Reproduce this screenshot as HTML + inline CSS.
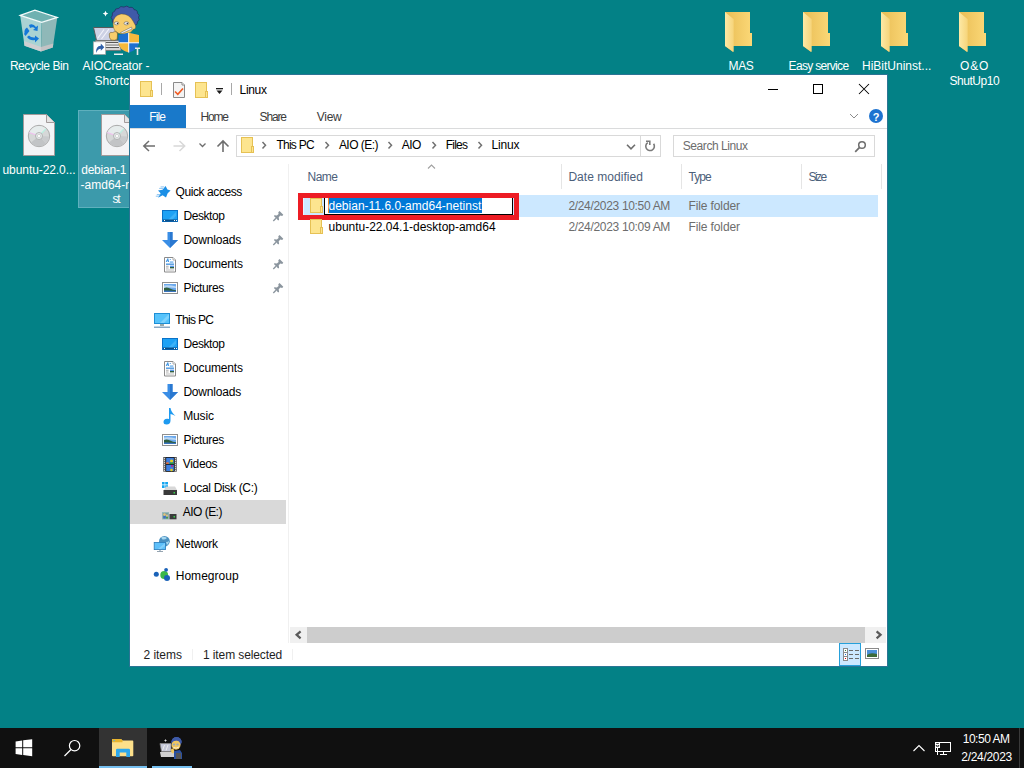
<!DOCTYPE html>
<html><head><meta charset="utf-8">
<style>
*{margin:0;padding:0;box-sizing:border-box}
html,body{width:1024px;height:768px;overflow:hidden}
body{background:#038186;position:relative;font-family:"Liberation Sans",sans-serif;font-size:12px;color:#000}
.a{position:absolute}
.t{position:absolute;white-space:nowrap;line-height:12px;font-size:12px}
svg.i{position:absolute;overflow:visible}
</style></head>
<body>
<svg class="i" style="left:0;top:0" width="1024" height="768">
 <defs>
  <linearGradient id="fback" x1="0" y1="0" x2="1" y2="0">
   <stop offset="0" stop-color="#e9bd55"/><stop offset="1" stop-color="#fbd877"/>
  </linearGradient>
  <linearGradient id="fflap" x1="0" y1="0" x2="1" y2="0">
   <stop offset="0" stop-color="#fde9a6"/><stop offset="1" stop-color="#f6d47a"/>
  </linearGradient>
  <linearGradient id="cd" x1="0" y1="0" x2="0" y2="1">
   <stop offset="0" stop-color="#e9eaea"/><stop offset="0.55" stop-color="#d2d3d3"/><stop offset="1" stop-color="#b9b9b9"/>
  </linearGradient>
  <g id="dfold">
   <path d="M0 0 H25 V21 H27 V34 H8 V40 L0 34 Z" fill="url(#fback)"/>
   <path d="M0 0 L8.7 7.3 V40 L0 34 Z" fill="url(#fflap)"/>
  </g>
  <g id="iso">
   <path d="M0.5 0.5 H23.5 L31.5 8.5 V41.5 H0.5 Z" fill="#f3f4f6" stroke="#a39b9b"/>
   <path d="M23.5 0.5 V8.5 H31.5" fill="#e4e4e4" stroke="#a39b9b"/>
   <circle cx="16" cy="22" r="10.7" fill="#d6d8d8" stroke="#9c9c9c" stroke-width="0.8"/>
   <path d="M16 22 L6.5 18.5 A10.3 10.3 0 0 1 23 14.6 Z" fill="#e6ecec"/>
   <path d="M16 22 L23 29.5 A10.3 10.3 0 0 1 8 28.5 Z" fill="#c2c4c6"/>
   <path d="M16 22 L26.3 22.5 A10.3 10.3 0 0 1 23 29.5 Z" fill="#c9cbcd"/>
   <path d="M16 22 L22.8 14.8" stroke="#b8f0e0" stroke-width="1.1"/>
   <path d="M16 22 L6.2 18.6" stroke="#f0c0f0" stroke-width="1.1"/>
   <circle cx="16" cy="22" r="3.5" fill="#e4eaea" stroke="#a8a8a8" stroke-width="0.8"/>
   <circle cx="16" cy="22" r="1.6" fill="#fff" stroke="#c0c0c0" stroke-width="0.6"/>
  </g>
 </defs>
 <!-- recycle bin -->
 <path d="M20.2 15.4 L41.7 22.3 L41 51.5 L24.5 45.7 Z" fill="#a9d3d3"/>
 <path d="M41.7 22.3 L57.3 17.4 L52.8 47.6 L41 51.5 Z" fill="#8fb8b8"/>
 <path d="M24 41 L41 47 L41 51.5 L24.5 45.7 Z" fill="#cfcfd1"/>
 <path d="M41 47 L53.3 43.5 L52.8 47.6 L41 51.5 Z" fill="#c3c3c5"/>
 <path d="M20.2 15.4 L34.9 10.2 L57.3 17.4 L41.7 22.3 Z" fill="#6fb1b1" stroke="#f4fbfb" stroke-width="1.2"/>
 <path d="M29 25 Q33 23 36 27 L38 25.5 L37.5 31 L33 30 L35 28.5 Q33 26.5 30 28 Z M24.5 33 Q24 29 27 27.5 L29.5 31 L25.5 36 L24 34 Z M27 37 Q30 41 35 40 L35 42.5 L39 38.5 L35 35.5 L35 37.5 Q31 38 29 35.5 Z" fill="#1478d8"/>
 <!-- AIOCreator placeholder -->
 <g id="aio">
  <path d="M93.5 27.5 H117 V40.5 H96.5 Z" fill="#cdd1e4" stroke="#5a5a5a" stroke-width="1"/>
  <path d="M97.5 38.5 L104 29.5 M101.5 39 L109 29" stroke="#f4f4fa" stroke-width="1.1"/>
  <path d="M95.5 40.5 H120 L121 50.5 H97.5 Z" fill="#d4d4d4" stroke="#707070" stroke-width="0.8"/>
  <path d="M98 42.5 H118 M99 45 H119 M99 47.5 H119" stroke="#222" stroke-width="0.7"/>
  <path d="M98 43.8 H118.5 M99 46.3 H119" stroke="#f4f4f4" stroke-width="1"/>
  <path d="M114 53.5 H123 V55 H114 Z" fill="#eee"/>
  <path d="M138.5 17.5 Q140.4 20.1 137.4 21.8 Q137.8 25.0 134.1 25.3 Q133.0 28.5 129.4 27.5 Q126.9 30.1 123.9 27.9 Q120.5 29.6 118.7 26.6 Q115.0 26.9 114.6 23.7 Q111.2 22.7 112.4 19.7 Q109.9 17.5 112.4 15.3 Q111.2 12.3 114.6 11.3 Q115.0 8.1 118.7 8.4 Q120.5 5.4 123.9 7.1 Q126.9 4.9 129.4 7.5 Q133.0 6.5 134.1 9.7 Q137.8 10.0 137.4 13.2 Q140.4 14.9 138.5 17.5 Z" fill="#3f5aa8" stroke="#1c2550" stroke-width="0.6"/>
  <path d="M113 24 Q113 15.5 121 14 Q129 13.5 133 21 L135.5 25.5 Q136.5 29 133 29.5 Q131 33.5 125 34 Q118 34.5 115 31 Q113 28 113 24 Z" fill="#f7cd6b" stroke="#5a4a20" stroke-width="0.4"/>
  <ellipse cx="116.5" cy="23.3" rx="2.3" ry="1.6" fill="#e8eaf0" stroke="#555" stroke-width="0.5"/>
  <ellipse cx="126.4" cy="23.3" rx="2.4" ry="1.6" fill="#e8eaf0" stroke="#555" stroke-width="0.5"/>
  <circle cx="117.5" cy="23.4" r="0.7" fill="#333"/><circle cx="127.3" cy="23.4" r="0.7" fill="#333"/>
  <path d="M120.5 32.5 L131.5 27 L132 29 L122 33.5 Z" fill="#f0f0f0" stroke="#444" stroke-width="0.4"/>
  <path d="M109.3 34 Q110 31.5 112.5 32.5 L115 31.5 Q117.5 31.5 117.5 34 L117.2 39 Q115 41 111 40 Q109 38 109.3 34 Z" fill="#f7cd6b" stroke="#5a4a20" stroke-width="0.5"/>
  <path d="M118.6 35 L128.7 32.8 L139 35 V43 Q138 50 128.7 52.5 Q119 50 118.6 43 Z" fill="#1d6fd0"/>
  <path d="M128.7 32.8 L139 35 V42.8 H128.7 Z M118.6 42.8 H128.7 V52.5 Q119 50 118.6 43 Z" fill="#f6b93b"/>
  <path d="M128.7 33 V52.5 M118.6 42.8 H139" stroke="#fff" stroke-width="1"/>
  <path d="M105.5 10.8 L106.4 12.7 L108.3 13.6 L106.4 14.5 L105.5 16.4 L104.6 14.5 L102.7 13.6 L104.6 12.7 Z" fill="#fff"/>
  <rect x="93.3" y="41.8" width="12.4" height="12.6" fill="#fff" stroke="#a0a0a0" stroke-width="0.7"/>
  <path d="M96.2 53 Q95.5 46 100.8 45.8 V43.6 L104.3 47.2 L100.8 50.8 V48.8 Q97.8 48.8 96.2 53 Z" fill="#2f5fa8"/>
  <path d="M135 47.5 H140 V49 H138.3 V55 H136.7 V49 H135 Z" fill="#e8e8e8"/>
 </g>
 <!-- ISO icons -->
 <use href="#iso" x="23" y="114"/>
 <rect x="78.5" y="110.5" width="60" height="97" fill="#3c9aab" stroke="#5fb0bd"/>
 <use href="#iso" x="101" y="114"/>
 <!-- folders right -->
 <use href="#dfold" x="725" y="12"/>
 <use href="#dfold" x="803" y="12"/>
 <use href="#dfold" x="881" y="12"/>
 <use href="#dfold" x="959" y="12"/>
</svg>

<div class="t" style="left:9.90px;top:60px;color:#fff;letter-spacing:-0.438px">Recycle Bin</div><div class="t" style="left:82.50px;top:60px;color:#fff;letter-spacing:-0.093px">AIOCreator -</div><div class="t" style="left:94.50px;top:75px;color:#fff">Shortcut</div><div class="t" style="left:2.50px;top:164px;color:#fff;letter-spacing:-0.079px">ubuntu-22.0...</div><div class="t" style="left:81.20px;top:164px;color:#fff;letter-spacing:-0.219px">debian-1</div><div class="t" style="left:80.60px;top:179px;color:#fff">-amd64-netin</div><div class="t" style="left:112.40px;top:193px;color:#fff;letter-spacing:-1.200px">st</div><div class="t" style="left:728.50px;top:60px;color:#fff;letter-spacing:-0.350px">MAS</div><div class="t" style="left:788.60px;top:60px;color:#fff;letter-spacing:-0.686px">Easy service</div><div class="t" style="left:862.00px;top:60px;color:#fff;letter-spacing:-0.001px">HiBitUninst...</div><div class="t" style="left:960.00px;top:60px;color:#fff;letter-spacing:0.831px">O&amp;O</div><div class="t" style="left:949.40px;top:74.5px;color:#fff;letter-spacing:-0.443px">ShutUp10</div>
<!-- window frame -->
<div class="a" style="left:129px;top:74px;width:759px;height:593px;background:#fff;border:1px solid #2b7494"></div>
<!-- title bar quick access toolbar -->
<svg class="i" style="left:0;top:0" width="1024" height="768" viewBox="0 0 1024 768">
  <!-- folder1 -->
  <g id="qfold">
    <rect x="140.5" y="81.5" width="11" height="15" fill="#fde58f" stroke="#e6c154"/>
    <rect x="150.5" y="90.5" width="2" height="6" fill="#fde58f" stroke="#e6c154"/>
  </g>
  <line x1="161.5" y1="83" x2="161.5" y2="95" stroke="#a8a8a8"/>
  <!-- properties doc -->
  <path d="M173.5 82.5 H182 L184.5 85 V97.5 H173.5 Z" fill="#f4f4f4" stroke="#8a8a8a"/>
  <path d="M182 82.5 V85 H184.5" fill="#fff" stroke="#8a8a8a"/>
  <path d="M175 91.5 L177.8 94.3 L183 88.5" fill="none" stroke="#f05a22" stroke-width="1.6"/>
  <!-- folder2 -->
  <rect x="195.5" y="82.5" width="11" height="15" fill="#fde58f" stroke="#e6c154"/>
  <rect x="205.5" y="91.5" width="2" height="6" fill="#fde58f" stroke="#e6c154"/>
  <!-- dropdown -->
  <rect x="216" y="88" width="7" height="1.3" fill="#1a1a1a"/>
  <path d="M216.5 90.5 H222.5 L219.5 94 Z" fill="#1a1a1a"/>
  <line x1="231.5" y1="83" x2="231.5" y2="95" stroke="#a8a8a8"/>
  <!-- min max close -->
  <rect x="768" y="89" width="10" height="1" fill="#000"/>
  <rect x="813.5" y="84.5" width="9" height="9" fill="none" stroke="#000"/>
  <path d="M859 84 L869 94 M869 84 L859 94" stroke="#000" stroke-width="1.05"/>
</svg>
<!-- ribbon -->
<div class="a" style="left:130px;top:128px;width:757px;height:1px;background:#dadbdc"></div>
<div class="a" style="left:130px;top:105px;width:56px;height:23px;background:#1979ca"></div>
<svg class="i" style="left:0;top:0" width="1024" height="768">
  <path d="M850 114 L854 118 L858 114" fill="none" stroke="#8c8c8c" stroke-width="1"/>
  <circle cx="876" cy="116" r="7" fill="#1e73d0"/>
  <text x="876" y="120.5" font-family="Liberation Sans" font-weight="bold" font-size="11" fill="#fff" text-anchor="middle">?</text>
</svg>
<!-- nav buttons -->
<svg class="i" style="left:0;top:0" width="1024" height="768">
  <path d="M143.5 146 H155 M149 141 L143.8 146 L149 151" fill="none" stroke="#6e6e6e" stroke-width="1.5"/>
  <path d="M185 146 H173.5 M179.5 141 L184.7 146 L179.5 151" fill="none" stroke="#d8d8d8" stroke-width="1.5"/>
  <path d="M199.5 143.5 L202.5 146.5 L205.5 143.5" fill="none" stroke="#6e6e6e" stroke-width="1.3"/>
  <path d="M223 152 V141 M217.5 146.5 L223 141 L228.5 146.5" fill="none" stroke="#6e6e6e" stroke-width="1.6"/>
</svg>
<!-- address box -->
<div class="a" style="left:236px;top:135px;width:425px;height:22px;border:1px solid #d9d9d9"></div>
<div class="a" style="left:640px;top:135px;width:1px;height:22px;background:#d9d9d9"></div>
<svg class="i" style="left:0;top:0" width="1024" height="768">
  <rect x="241.5" y="137.5" width="11" height="15" fill="#fde58f" stroke="#e6c154"/>
  <rect x="251.5" y="146.5" width="2" height="6" fill="#fde58f" stroke="#e6c154"/>
  <path d="M262.5 142 L265.5 145.2 L262.5 148.4" fill="none" stroke="#707070" stroke-width="1.5"/>
  <path d="M325.5 142 L328.5 145.2 L325.5 148.4" fill="none" stroke="#707070" stroke-width="1.5"/>
  <path d="M388.5 142 L391.5 145.2 L388.5 148.4" fill="none" stroke="#707070" stroke-width="1.5"/>
  <path d="M432.5 142 L435.5 145.2 L432.5 148.4" fill="none" stroke="#707070" stroke-width="1.5"/>
  <path d="M478.5 142 L481.5 145.2 L478.5 148.4" fill="none" stroke="#707070" stroke-width="1.5"/>
  <path d="M627 144.8 L631 148.8 L635 144.8" fill="none" stroke="#6e6e6e" stroke-width="1.6"/>
  <path d="M653.6 143.8 A4.3 4.3 0 1 1 647.8 142.6" fill="none" stroke="#7a7a7a" stroke-width="1.6"/>
  <path d="M646 141.2 L649.8 141.2 L649.8 145" fill="none" stroke="#7a7a7a" stroke-width="1.6"/>
</svg>
<!-- search box -->
<div class="a" style="left:673px;top:135px;width:202px;height:22px;border:1px solid #d9d9d9"></div>
<svg class="i" style="left:0;top:0" width="1024" height="768">
  <circle cx="862" cy="145" r="3.3" fill="none" stroke="#6e6e6e" stroke-width="1.5"/>
  <path d="M859.6 147.4 L855.2 151.8" stroke="#6e6e6e" stroke-width="1.7"/>
</svg>
<!-- nav pane separator -->
<div class="a" style="left:288px;top:164px;width:1px;height:479px;background:#f0f0f0"></div>
<!-- column headers -->
<svg class="i" style="left:0;top:0" width="1024" height="768">
  <path d="M428 168.5 L431.5 165 L435 168.5" fill="none" stroke="#a0a0a0" stroke-width="1.1"/>
  <rect x="561" y="164" width="1" height="25" fill="#e5e5e5"/>
  <rect x="681" y="164" width="1" height="25" fill="#e5e5e5"/>
  <rect x="801" y="164" width="1" height="25" fill="#e5e5e5"/>
  <rect x="881" y="164" width="1" height="25" fill="#e5e5e5"/>
</svg>
<!-- selection row -->
<div class="a" style="left:298px;top:195px;width:580px;height:22px;background:#cce8ff"></div>
<!-- red box -->
<div class="a" style="left:298px;top:193px;width:221px;height:27px;border:5px solid #ed1c24"></div>
<div class="a" style="left:303px;top:198px;width:1px;height:17px;background:#e8f4ff"></div>
<!-- textbox -->
<div class="a" style="left:324px;top:198px;width:189px;height:17px;background:#fff;border-left:1px solid #000;border-right:1px solid #000;border-bottom:1px solid #000"></div>
<div class="a" style="left:328px;top:198px;width:1px;height:15px;background:#f28a1f"></div>
<div class="a" style="left:329px;top:198px;width:153px;height:15px;background:#0078d7"></div>
<svg class="i" style="left:0;top:0" width="1024" height="768">
  <rect x="310.5" y="198.5" width="11" height="14" fill="#fde58f" stroke="#e6c154"/>
  <rect x="320.5" y="206.5" width="2" height="6" fill="#fde58f" stroke="#e6c154"/>
  <rect x="310.5" y="219.5" width="11" height="14" fill="#fde58f" stroke="#e6c154"/>
  <rect x="320.5" y="227.5" width="2" height="6" fill="#fde58f" stroke="#e6c154"/>
</svg>
<!-- nav highlight -->
<div class="a" style="left:130px;top:500px;width:156px;height:24px;background:#d9d9d9"></div>
<!-- nav icons -->
<svg class="i" style="left:0;top:0" width="1024" height="768">
 <defs>
  <g id="ndesk">
   <rect x="0.5" y="0.5" width="15" height="11" fill="#1ea2f5" stroke="#0a72c8"/>
   <path d="M6 10 L14 2 V6 L10 10 Z" fill="#53bdfa" opacity="0.6"/>
   <rect x="1" y="9.5" width="14" height="2" fill="#0a4f8a"/>
   <rect x="2" y="10" width="1" height="1" fill="#fff"/><rect x="12" y="10" width="1" height="1" fill="#fff"/><rect x="14" y="10" width="1" height="1" fill="#fff"/>
  </g>
  <g id="ndown">
   <path d="M5.5 0 H10.5 V8 H16 L8 16 L0 8 H5.5 Z" fill="#3a8ee6"/>
   <path d="M8 0 H10.5 V8 H16 L8 16 Z" fill="#2a78d0"/>
  </g>
  <g id="ndoc">
   <path d="M0.5 0.5 H9 L11.5 3 V15 H0.5 Z" fill="#fff" stroke="#8a8a8a"/>
   <path d="M9 0.5 V3 H11.5" fill="#fff" stroke="#9a9a9a" stroke-width="0.8"/>
   <path d="M2.2 5 L3.8 1.6 L4.6 5 M2.8 3.8 H4.3" stroke="#2a8ae0" stroke-width="0.9" fill="none"/>
   <rect x="5.8" y="4.6" width="3.6" height="0.9" fill="#2a8ae0"/>
   <rect x="5.8" y="2" width="0.9" height="0.9" fill="#2a8ae0"/>
   <rect x="2" y="6.6" width="8" height="1.1" fill="#1a7ad8"/>
   <rect x="2" y="8.8" width="2.6" height="0.8" fill="#999"/>
   <rect x="2" y="10.6" width="2.6" height="0.8" fill="#999"/>
   <rect x="6" y="8.6" width="4" height="1.4" fill="#5a9ae8"/>
   <rect x="6" y="10" width="4" height="1.4" fill="#2f5e3e"/>
   <rect x="2" y="12.6" width="8" height="0.8" fill="#aaa"/>
  </g>
  <g id="npic">
   <rect x="0.5" y="0.5" width="15" height="11" fill="#fff" stroke="#8f8f8f"/>
   <rect x="2" y="2" width="12" height="8" fill="#6aa8ec"/>
   <path d="M2 3.5 Q7 2.5 14 4.5 V6 Q8 5 2 6 Z" fill="#cfe4f6" opacity="0.8"/>
   <path d="M2 6 Q5 5 8 6.5 Q11 8 14 8.3 V10 H2 Z" fill="#2f5e3e"/>
   <path d="M2 8.6 Q8 8.2 14 9 V10 H2 Z" fill="#3a74c0"/>
  </g>
 </defs>
 <!-- quick access star -->
 <path d="M165.6 186 L167.4 189.6 L170.6 190.4 L167.7 193.2 L166 197.5 L162.6 195.3 L158.1 197.8 L160.6 193.3 L158 190.4 L162.5 189.8 Z" fill="#1b8fe6"/>
 <path d="M160.6 186.9 H164.2 M159.2 188.4 H163 M156.8 194.6 H160.4 M155.8 196.2 H159.2" stroke="#7fbdf0" stroke-width="0.9"/>
 <use href="#ndesk" x="162" y="210"/>
 <use href="#ndown" x="162" y="232"/>
 <use href="#ndoc" x="164" y="257"/>
 <use href="#npic" x="162" y="282"/>
 <!-- this pc -->
 <rect x="154.5" y="313.5" width="15" height="10" fill="#56c3fb" stroke="#1d8fd6"/>
 <path d="M160 323 L169 314 V318 L164 323 Z" fill="#8ed8fd" opacity="0.7"/>
 <rect x="160" y="324" width="4" height="2" fill="#9aa"/>
 <rect x="154" y="326.5" width="16" height="1.5" fill="#8aa9c4"/>
 <use href="#ndesk" x="162" y="338"/>
 <use href="#ndoc" x="164" y="361"/>
 <use href="#ndown" x="162" y="384"/>
 <!-- music -->
 <path d="M169 408 H170.5 Q171 412 175.5 416 Q173 414.5 170.5 414 V420.5 Q170.5 424.5 166.5 424.5 Q163.5 424.5 163.5 422 Q163.5 419 167 418.7 Q168.2 418.6 169 419 Z" fill="#1e9af0"/>
 <use href="#npic" x="162" y="434"/>
 <!-- videos -->
 <rect x="163.2" y="457" width="13.6" height="14.7" fill="#5a5a5a"/>
 <rect x="165.6" y="457" width="8.8" height="14.7" fill="#151515"/>
 <rect x="166.2" y="457.8" width="7.6" height="6.2" fill="#3d7fe0"/>
 <rect x="166.2" y="464.8" width="7.6" height="6.2" fill="#3d7fe0"/>
 <circle cx="171.6" cy="461" r="1.6" fill="#e8d020"/><rect x="169.5" y="462.5" width="4.3" height="1.5" fill="#2e9a3a"/>
 <rect x="166.2" y="462.3" width="2.5" height="1.7" fill="#e86a30"/>
 <circle cx="171.5" cy="470" r="1.3" fill="#e8d020"/><circle cx="172" cy="466" r="1" fill="#c02080"/>
 <path d="M164.4 458.2 V471 M175.6 458.2 V471" stroke="#fff" stroke-width="1" stroke-dasharray="1 1"/>
 <!-- local disk -->
 <path d="M162 482 h2.6 v2.6 h-2.6z M165.2 482 h2.8 v2.6 h-2.8z M162 485.2 h2.6 v2.8 h-2.6z M165.2 485.2 h2.8 v2.8 h-2.8z" fill="#14a5f0"/>
 <path d="M164 490 L166 486.5 H175 L177 490 Z" fill="#d8d8d8"/>
 <rect x="163.5" y="490" width="13.5" height="5" fill="#3a3a3a"/>
 <rect x="173.5" y="492" width="1.5" height="1.5" fill="#37d34a"/>
 <!-- AIO -->
 <rect x="162" y="512" width="7" height="7.5" fill="#9bb"/>
 <rect x="162.8" y="513" width="5.5" height="5.5" fill="#7aa0a0"/>
 <circle cx="164.5" cy="514.5" r="1.2" fill="#e9c27a"/><rect x="163.3" y="516" width="2.5" height="2.5" fill="#3a70c0"/>
 <circle cx="167" cy="515.5" r="1" fill="#e9c27a"/><rect x="166" y="517" width="2" height="1.5" fill="#4a9a4a"/>
 <path d="M170 514 L171 511 H176 V514 Z" fill="#d8d8d8"/>
 <rect x="169.5" y="514" width="7" height="5.3" fill="#3a3a3a"/>
 <rect x="173.5" y="516" width="1.5" height="1.5" fill="#37d34a"/>
 <!-- network -->
 <circle cx="164.4" cy="541.3" r="5.4" fill="#4a90c0"/>
 <path d="M161 537.5 Q164 536 167 538 Q165 540 162.5 539.5 Z M166 542 Q168.5 542 169.3 540.5 Q169 544 167 545 Z" fill="#a8d8f0"/>
 <rect x="154.2" y="542.4" width="11.4" height="7.2" fill="#5ec0fa" stroke="#2a7ab8" stroke-width="0.8"/>
 <path d="M158 549 L165 543 V546 L161 549 Z" fill="#9ad8fc" opacity="0.6"/>
 <rect x="159" y="550.3" width="2" height="0.8" fill="#9ab"/>
 <rect x="157" y="551.1" width="6" height="0.9" fill="#8a9aa8"/>
 <!-- homegroup -->
 <circle cx="156.3" cy="574.3" r="2.5" fill="#1a62b8"/>
 <circle cx="164.2" cy="575" r="3.9" fill="#3cb84a"/>
 <circle cx="166.1" cy="569.8" r="1.9" fill="#1a62b8"/>
 <circle cx="167" cy="578.1" r="3" fill="#1a62b8"/>
 <!-- pins -->
 <g id="pin">
  <path d="M279.5 211 L283.3 214.8 L282.2 215.9 L280.4 215.6 L278.7 217.3 L279.1 219.8 L278.2 220.4 L273.9 216.1 L274.4 215.2 L276.9 215.6 L278.6 213.9 L278.3 212.2 Z" fill="#8b959e"/>
  <path d="M276 218.2 L273.3 220.9" stroke="#8b959e" stroke-width="1.4"/>
 </g>
 <use href="#pin" x="0" y="24"/>
 <use href="#pin" x="0" y="48"/>
 <use href="#pin" x="0" y="72"/>
</svg>

<!-- scrollbar -->
<div class="a" style="left:290px;top:627px;width:596px;height:16px;background:#f0f0f0"></div>
<div class="a" style="left:307px;top:627px;width:558px;height:16px;background:#cdcdcd"></div>
<svg class="i" style="left:0;top:0" width="1024" height="768">
  <path d="M300.6 631.3 L296.6 634.8 L300.6 638.3" fill="none" stroke="#5a5a5a" stroke-width="2.2"/>
  <path d="M876.6 631.3 L880.6 634.8 L876.6 638.3" fill="none" stroke="#5a5a5a" stroke-width="2.2"/>
</svg>
<!-- status bar -->
<div class="a" style="left:192px;top:649px;width:1px;height:11px;background:#f0f0f0"></div>
<div class="a" style="left:292px;top:649px;width:1px;height:11px;background:#f0f0f0"></div>
<div class="a" style="left:839px;top:643px;width:22px;height:23px;background:#cce8ff;border:1px solid #26a0da"></div>
<svg class="i" style="left:0;top:0" width="1024" height="768">
  <rect x="843.5" y="648.5" width="4" height="4" fill="#fff" stroke="#8a8a8a"/>
  <rect x="843.5" y="652.5" width="4" height="4" fill="#fff" stroke="#8a8a8a"/>
  <rect x="843.5" y="656.5" width="4" height="4" fill="#fff" stroke="#8a8a8a"/>
  <rect x="845" y="650" width="1" height="1" fill="#2e7d32"/>
  <rect x="845" y="654" width="1" height="1" fill="#1e73d0"/>
  <rect x="845" y="658" width="1" height="1" fill="#d00"/>
  <path d="M849 650.5 H853 M855 650.5 H859 M849 654.5 H853 M855 654.5 H859 M849 658.5 H853 M855 658.5 H859" stroke="#6a6a6a" stroke-width="1.2"/>
  <rect x="865.5" y="648.5" width="13" height="10" fill="#fff" stroke="#8a8a8a"/>
  <rect x="867" y="650" width="10" height="7" fill="#4a90d9"/>
  <path d="M867 655 Q870 652 877 654 V657 H867 Z" fill="#3d6b3a"/>
</svg>

<div class="t" style="left:239.50px;top:84px;color:#000;letter-spacing:-0.297px">Linux</div><div class="t" style="left:149.20px;top:111px;color:#fff;letter-spacing:-0.854px">File</div><div class="t" style="left:200.50px;top:111px;color:#3b3b3b;letter-spacing:-1.212px">Home</div><div class="t" style="left:259.60px;top:111px;color:#3b3b3b;letter-spacing:-1.162px">Share</div><div class="t" style="left:316.80px;top:111px;color:#3b3b3b;letter-spacing:-0.309px">View</div><div class="t" style="left:276.40px;top:139px;color:#000;letter-spacing:-0.735px">This PC</div><div class="t" style="left:338.90px;top:139px;color:#000;letter-spacing:-0.534px">AIO (E:)</div><div class="t" style="left:401.70px;top:139px;color:#000;letter-spacing:-0.519px">AIO</div><div class="t" style="left:445.80px;top:139px;color:#000;letter-spacing:-0.784px">Files</div><div class="t" style="left:491.60px;top:139px;color:#000;letter-spacing:-0.172px">Linux</div><div class="t" style="left:682.80px;top:140px;color:#6d6d6d;letter-spacing:-0.440px">Search Linux</div><div class="t" style="left:307.50px;top:171px;color:#4c607a;letter-spacing:-0.512px">Name</div><div class="t" style="left:568.40px;top:171px;color:#4c607a;letter-spacing:0.036px">Date modified</div><div class="t" style="left:688.50px;top:171px;color:#4c607a;letter-spacing:-0.947px">Type</div><div class="t" style="left:808.50px;top:171px;color:#4c607a;letter-spacing:-1.590px">Size</div><div class="t" style="left:328.50px;top:200px;color:#fff;letter-spacing:0.007px">debian-11.6.0-amd64-netinst</div><div class="t" style="left:568.40px;top:200px;color:#6d6d6d;letter-spacing:-0.323px">2/24/2023 10:50 AM</div><div class="t" style="left:688.50px;top:200px;color:#6d6d6d;letter-spacing:-0.119px">File folder</div><div class="t" style="left:328.60px;top:221px;color:#000;letter-spacing:-0.018px">ubuntu-22.04.1-desktop-amd64</div><div class="t" style="left:568.40px;top:221px;color:#6d6d6d;letter-spacing:-0.323px">2/24/2023 10:09 AM</div><div class="t" style="left:688.50px;top:221px;color:#6d6d6d;letter-spacing:-0.119px">File folder</div><div class="t" style="left:175.60px;top:186px;color:#000;letter-spacing:-0.423px">Quick access</div><div class="t" style="left:183.40px;top:210px;color:#000;letter-spacing:-0.425px">Desktop</div><div class="t" style="left:183.40px;top:234px;color:#000;letter-spacing:-0.196px">Downloads</div><div class="t" style="left:183.50px;top:258px;color:#000;letter-spacing:-0.149px">Documents</div><div class="t" style="left:183.50px;top:282px;color:#000;letter-spacing:-0.364px">Pictures</div><div class="t" style="left:175.30px;top:314px;color:#000;letter-spacing:-0.668px">This PC</div><div class="t" style="left:183.40px;top:338px;color:#000;letter-spacing:-0.425px">Desktop</div><div class="t" style="left:183.50px;top:362px;color:#000;letter-spacing:-0.149px">Documents</div><div class="t" style="left:183.40px;top:386px;color:#000;letter-spacing:-0.196px">Downloads</div><div class="t" style="left:183.20px;top:410px;color:#000;letter-spacing:-0.134px">Music</div><div class="t" style="left:183.50px;top:434px;color:#000;letter-spacing:-0.364px">Pictures</div><div class="t" style="left:182.80px;top:458px;color:#000;letter-spacing:-0.335px">Videos</div><div class="t" style="left:183.60px;top:482px;color:#000;letter-spacing:-0.327px">Local Disk (C:)</div><div class="t" style="left:182.80px;top:506px;color:#000;letter-spacing:-0.534px">AIO (E:)</div><div class="t" style="left:175.70px;top:538px;color:#000;letter-spacing:-0.285px">Network</div><div class="t" style="left:175.70px;top:570px;color:#000;letter-spacing:0.034px">Homegroup</div><div class="t" style="left:143.60px;top:649px;color:#1e1e1e;letter-spacing:-0.063px">2 items</div><div class="t" style="left:203.00px;top:649px;color:#1e1e1e;letter-spacing:-0.110px">1 item selected</div>
<div class="a" style="left:0;top:728px;width:1024px;height:40px;background:#101010"></div>
<div class="a" style="left:99px;top:728px;width:48px;height:40px;background:#333333"></div>
<div class="a" style="left:99px;top:766px;width:48px;height:2px;background:#76c0f0"></div>
<div class="a" style="left:152px;top:766px;width:40px;height:2px;background:#76c0f0"></div>
<svg class="i" style="left:0;top:0" width="1024" height="768">
 <!-- windows logo -->
 <path d="M15.6 741.4 L22.2 740.5 V747.2 H15.6 Z M23.2 740.3 L32.2 739.2 V747.2 H23.2 Z M15.6 748.2 H22.2 V755 L15.6 754.1 Z M23.2 748.2 H32.2 V756.2 L23.2 755.1 Z" fill="#fff"/>
 <!-- search -->
 <circle cx="74.6" cy="745.7" r="5.2" fill="none" stroke="#fff" stroke-width="1.2"/>
 <path d="M71 749.5 L64.5 756" stroke="#fff" stroke-width="1.3"/>
 <!-- explorer -->
 <path d="M112 740 Q112 739 113 739 H121 L122.5 740.5 H132.5 Q133.3 740.5 133.3 741.5 V755.5 Q133.3 756.3 132.5 756.3 H113 Q112 756.3 112 755.5 Z" fill="#fde08a"/>
 <path d="M112 740 Q112 739 113 739 H121 L122.5 740.5 V742.2 H112 Z" fill="#e9b52e"/>
 <rect x="113.5" y="740" width="1.2" height="1.2" fill="#4fb4e8"/>
 <path d="M116 757 V750 Q116 748.7 117.3 748.7 H128.7 Q130 748.7 130 750 V757 H126.3 V752.4 H119.7 V757 Z" fill="#2ea8ec"/>
 <!-- AIOCreator small -->
 <g transform="translate(160,736) scale(0.5)">
  <path d="M0 15 H22 V31 H3 Z" fill="#c5c8d8" stroke="#888" stroke-width="1.5"/>
  <path d="M5 29 L9 18 M12 29 L16 18" stroke="#eee" stroke-width="2"/>
  <path d="M0 32 H30 L31 42 H2 Z" fill="#d0d0d0"/>
  <circle cx="33" cy="12" r="10" fill="#3e5aa7"/>
  <ellipse cx="32" cy="18" rx="9" ry="9.5" fill="#f0c860"/>
  <path d="M22 14 Q24 2 33 2 Q43 3 44 14 Q39 9 33 9 Q26 9 22 14 Z" fill="#3e5aa7"/>
  <ellipse cx="28" cy="17" rx="2.5" ry="1.8" fill="#9ab"/><ellipse cx="35" cy="17" rx="2.5" ry="1.8" fill="#9ab"/>
  <path d="M27 23 Q32 26 38 22" stroke="#fff" stroke-width="1.5" fill="none"/>
  <path d="M22 27 Q26 23 28 28 L30 33 L25 35 Q21 33 22 27 Z" fill="#f0c860"/>
  <path d="M28 30 L40 28 L44 34 V46 H28 Z" fill="#2a50a0"/>
  <rect x="32" y="34" width="10" height="12" fill="#555"/>
  <path d="M11 6 L12 8 L14 9 L12 10 L11 12 L10 10 L8 9 L10 8 Z" fill="#ddd"/>
 </g>
 <!-- tray -->
 <path d="M913.5 751 L919 745.5 L924.5 751" fill="none" stroke="#fff" stroke-width="1.1"/>
 <rect x="935.5" y="742.5" width="15" height="9" fill="none" stroke="#fff" stroke-width="1"/>
 <rect x="935" y="742" width="5" height="6" fill="#fff"/>
 <rect x="936.2" y="743" width="2.6" height="0.8" fill="#101010"/>
 <path d="M936.3 745 V746.2 H938.7 V745" stroke="#101010" stroke-width="0.9" fill="none"/>
 <rect x="937" y="748" width="1" height="7" fill="#fff"/>
 <rect x="943" y="752" width="1" height="2.5" fill="#fff"/>
 <rect x="940" y="754" width="7" height="1" fill="#fff"/>
 <rect x="1019" y="728" width="1" height="40" fill="#3a3a3a"/>
</svg>

<div class="t" style="left:962.70px;top:733px;color:#fff;letter-spacing:-0.467px">10:50 AM</div><div class="t" style="left:961.30px;top:751px;color:#fff;letter-spacing:-0.314px">2/24/2023</div>
</body></html>
